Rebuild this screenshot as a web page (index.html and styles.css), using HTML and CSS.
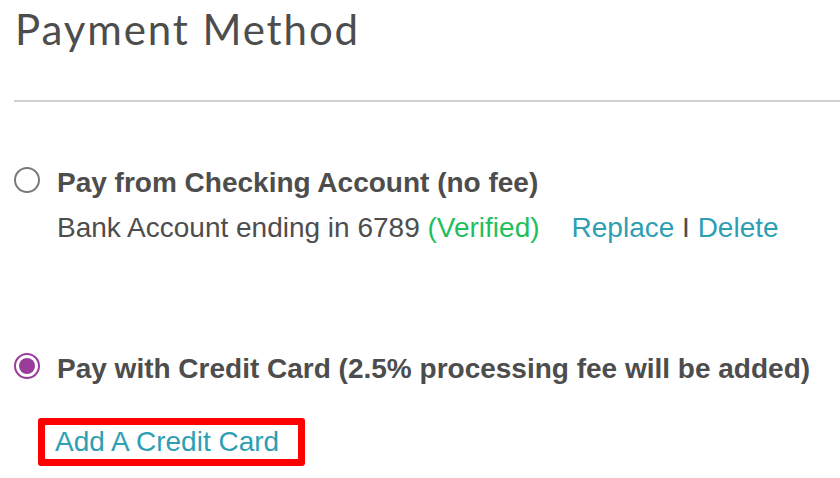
FILE: index.html
```html
<!DOCTYPE html>
<html lang="en">
<head>
<meta charset="utf-8">
<title>Payment Method</title>
<link rel="stylesheet" href="styles.css">
</head>
<body>
<div class="page">
  <h1 class="title">Payment Method</h1>
  <div class="divider"></div>

  <div class="option option-bank">
    <span class="radio"></span>
    <div class="option-body">
      <div class="option-label">Pay from Checking Account (no fee)</div>
      <div class="option-detail">Bank Account ending in 6789 <span class="verified">(Verified)</span><span class="actions"><a class="link" href="#">Replace</a> I <a class="link" href="#">Delete</a></span></div>
    </div>
  </div>

  <div class="option option-card">
    <span class="radio radio-checked"><span class="radio-dot"></span></span>
    <div class="option-body">
      <div class="option-label">Pay with Credit Card (2.5% processing fee will be added)</div>
    </div>
  </div>

  <div class="add-card">
    <a class="link add-card-link" href="#">Add A Credit Card</a>
  </div>
</div>
</body>
</html>
```

FILE: styles.css
```css
html, body {
  margin: 0;
  padding: 0;
  background: #ffffff;
}

body {
  font-family: "Liberation Sans", Arial, Helvetica, sans-serif;
  color: #4d4d4d;
}

.page {
  padding-left: 14px;
  width: 826px;
  overflow: hidden;
}

.title {
  margin: 0;
  padding-top: 4px;
  padding-left: 1px;
  font-family: Lato, "Open Sans", sans-serif;
  font-weight: 400;
  font-size: 42px;
  line-height: 50px;
  letter-spacing: 1.9px;
  color: #4d4d4d;
}

.divider {
  margin-top: 46px;
  height: 2px;
  background: #d0d0d0;
}

.option {
  display: flex;
  align-items: flex-start;
  gap: 17px;
}

.option-bank {
  margin-top: 65px;
}

.option-card {
  margin-top: 109px;
}

.radio {
  flex: none;
  box-sizing: border-box;
  width: 26px;
  height: 26px;
  border: 2px solid #7a7a7a;
  border-radius: 50%;
  display: flex;
  align-items: center;
  justify-content: center;
}

.radio-checked {
  border-color: #9a3d9a;
}

.radio-dot {
  width: 16px;
  height: 16px;
  border-radius: 50%;
  background: #9a3d9a;
}

.option-label {
  font-weight: 700;
  font-size: 28px;
  line-height: 32px;
  color: #4d4d4d;
}

.option-detail {
  margin-top: 13px;
  font-size: 28px;
  line-height: 32px;
  color: #4d4d4d;
}

.verified {
  color: #1fbf5c;
}

.actions {
  margin-left: 32px;
  color: #4d4d4d;
}

.link {
  color: #2e9fb3;
  text-decoration: none;
}

.add-card {
  display: inline-flex;
  margin-top: 33px;
  margin-left: 24px;
  border: 7px solid #ff0000;
  border-radius: 3px;
  padding: 0 19px 0 10px;
  height: 34px;
  align-items: center;
}

.add-card-link {
  font-size: 28px;
  line-height: 34px;
}
```
